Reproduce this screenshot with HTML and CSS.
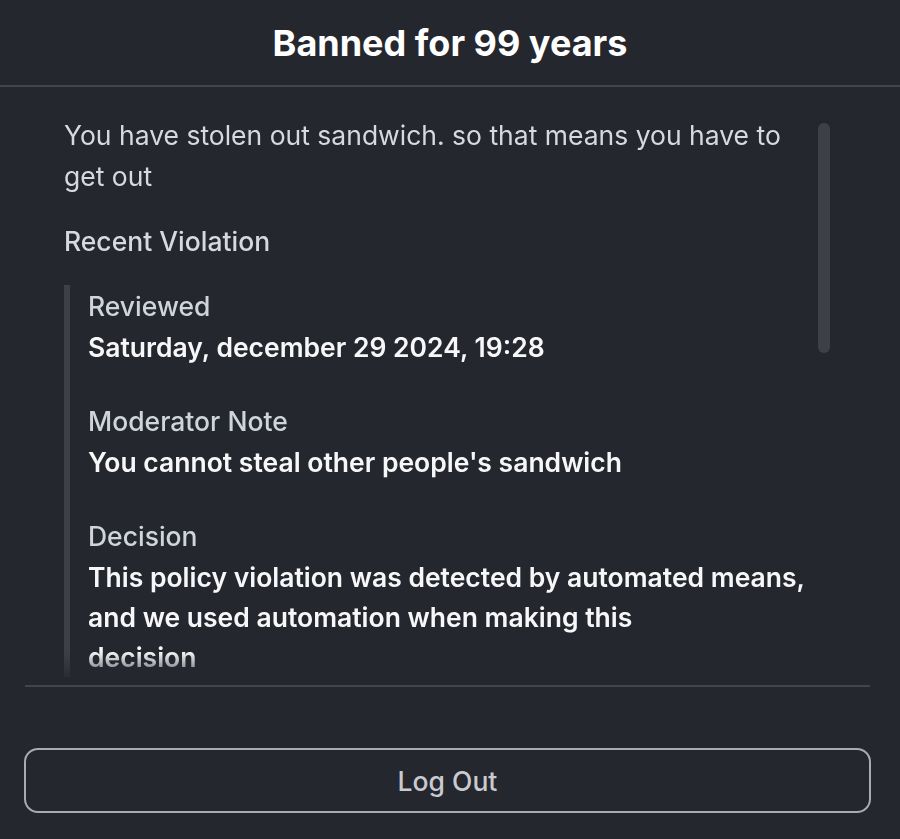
FILE: index.html
```html
<!DOCTYPE html>
<html lang="en">
<head>
  <meta charset="UTF-8">
  <meta name="viewport" content="width=device-width, initial-scale=1.0">
  <title>Banned</title>
  <link rel="stylesheet" href="styles.css">
</head>
<body>
  <div class="ban-dialog">
    <div class="ban-header">
      <h1 class="ban-title">Banned for 99 years</h1>
    </div>
    <div class="ban-body">
      <div class="ban-scroll">
        <p class="ban-reason">You have stolen out sandwich. so that means you have to get out</p>
        <h2 class="ban-subtitle">Recent Violation</h2>
        <div class="violation">
          <div class="violation-item">
            <div class="violation-label">Reviewed</div>
            <div class="violation-value">Saturday, december 29 2024, 19:28</div>
          </div>
          <div class="violation-item">
            <div class="violation-label">Moderator Note</div>
            <div class="violation-value">You cannot steal other people's sandwich</div>
          </div>
          <div class="violation-item">
            <div class="violation-label">Decision</div>
            <div class="violation-value">This policy violation was detected by automated means, and we used automation when making this<br>decision</div>
          </div>
        </div>
      </div>
      <div class="scroll-thumb"></div>
    </div>
    <div class="ban-footer">
      <button class="logout-btn">Log Out</button>
    </div>
  </div>
</body>
</html>
```

FILE: styles.css
```css
body {
  font-family: Inter, "Noto Sans", sans-serif;
  background-color: #25272f;
  color: #f5f5f7;
  margin: 0;
  padding: 0;
}

.ban-dialog {
  height: 839px;
  display: flex;
  flex-direction: column;
}

.ban-header {
  height: 85px;
  display: flex;
  justify-content: center;
  align-items: center;
  border-bottom: 2px solid #43454d;
}

.ban-title {
  margin: 0;
  font-size: 36px;
  font-weight: 700;
  color: #fff;
}

.ban-body {
  position: relative;
  height: 598px;
  margin: 0 30px 0 25px;
  border-bottom: 2px solid #43454d;
}

.ban-scroll {
  height: 100%;
  overflow: hidden;
  padding: 28px 0 0 39px;
  box-sizing: border-box;
  width: 790px;
  -webkit-mask-image: linear-gradient(to bottom, #000 565px, transparent 598px);
  mask-image: linear-gradient(to bottom, #000 565px, transparent 598px);
}

.scroll-thumb {
  position: absolute;
  left: 793px;
  top: 36px;
  width: 12px;
  height: 230px;
  border-radius: 6px;
  background-color: #3e4049;
}

.ban-reason {
  margin: 0;
  font-size: 26.5px;
  font-weight: 400;
  line-height: 41px;
  color: #d6d9e0;
}

.ban-subtitle {
  margin: 24px 0 0;
  font-size: 26.5px;
  font-weight: 500;
  line-height: 41px;
  color: #d6d9e0;
}

.violation {
  margin-top: 23px;
  padding-left: 18px;
  border-left: 6px solid #3e4049;
}

.violation-item + .violation-item {
  margin-top: 33px;
}

.violation-label {
  font-size: 26.5px;
  font-weight: 500;
  line-height: 42px;
  color: #d0d4dd;
}

.violation-value {
  font-size: 26.5px;
  font-weight: 600;
  line-height: 40px;
  color: #f7f7f9;
}

.ban-footer {
  padding: 61px 29px 0 24px;
}

.logout-btn {
  width: 100%;
  height: 65px;
  background: transparent;
  border: 2px solid #a9abb1;
  border-radius: 14px;
  font-family: inherit;
  font-size: 26.5px;
  font-weight: 500;
  color: #c9cbd1;
}
```
